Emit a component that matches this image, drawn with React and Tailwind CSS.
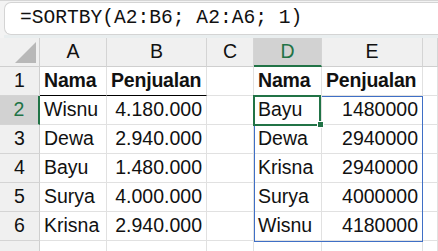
import React from "react";

const cols = ["A", "B", "C", "D", "E", ""];
const rows = [
  ["Nama", "Penjualan", "", "Nama", "Penjualan"],
  ["Wisnu", "4.180.000", "", "Bayu", "1480000"],
  ["Dewa", "2.940.000", "", "Dewa", "2940000"],
  ["Bayu", "1.480.000", "", "Krisna", "2940000"],
  ["Surya", "4.000.000", "", "Surya", "4000000"],
  ["Krisna", "2.940.000", "", "Wisnu", "4180000"],
];

function Cell({ r, c, v }) {
  const bold = r === 0 && v !== "";
  const right = r > 0 && (c === 1 || c === 4);
  const blackBottom = r === 0 && (c === 0 || c === 1);
  const sel = r === 1 && c === 3;
  return (
    <div
      className={
        "relative flex items-center border-r border-b px-[4px] whitespace-nowrap " +
        (blackBottom ? "border-b-black " : "border-b-[#e1e1e1] ") +
        "border-r-[#e1e1e1] " +
        (right ? "justify-end " : "justify-start ") +
        (bold ? "font-bold tracking-[-0.2px] " : "") +
        (sel ? "z-20 " : "")
      }
    >
      {v}
      {sel && (
        <>
          <div className="absolute -left-[1px] -top-[1px] w-[68px] h-[31px] border-2 border-[#217346]" />
          <div className="absolute -right-[3px] -bottom-[4px] w-[7px] h-[7px] bg-[#217346] border border-white" />
        </>
      )}
    </div>
  );
}

export default function App() {
  return (
    <div
      className="w-[438px] h-[251px] overflow-hidden bg-white text-[#111]"
      style={{ fontFamily: '"Liberation Sans", Arial, sans-serif' }}
    >
      {/* formula bar */}
      <div className="h-[38px] border-t border-[#d6d6d6] bg-[#f3f3f3] pl-[4px] pt-[1px] flex flex-col">
        <div className="h-[33px] bg-white border border-[#d4d4d4] rounded-l-[7px] border-r-0 flex items-center pl-[15px]">
          <span
            className="text-[19.6px] text-[#111] leading-none"
            style={{ fontFamily: '"Liberation Mono", "Courier New", monospace' }}
          >
            =SORTBY(A2:B6; A2:A6; 1)
          </span>
        </div>
        <div className="flex-1 bg-[#e9eeef]" />
      </div>

      {/* grid */}
      <div className="relative">
        <div className="grid grid-cols-[40px_67px_100px_47px_68px_101px_1fr] auto-rows-[29px] text-[19.5px]">
          {/* corner */}
          <div className="relative bg-[#f0f0f0] border-r border-b border-[#cfcfcf]">
            <svg className="absolute right-[3px] bottom-[3px]" width="21" height="21" viewBox="0 0 21 21">
              <polygon points="21,0 21,21 0,21" fill="#b8b8b8" />
            </svg>
          </div>
          {cols.map((c, i) => (
            <div
              key={c + i}
              className={
                "flex items-center justify-center border-r border-r-[#d4d4d4] " +
                (c === "D"
                  ? "bg-[#d2d2d2] text-[#217346] border-b-2 border-b-[#217346]"
                  : "bg-[#f0f0f0] border-b border-b-[#cfcfcf]")
              }
            >
              {c}
            </div>
          ))}
          {rows.map((row, r) => (
            <React.Fragment key={r}>
              <div
                className={
                  "flex items-center justify-center border-b border-b-[#d4d4d4] " +
                  (r === 1
                    ? "bg-[#d2d2d2] text-[#217346] border-r-2 border-r-[#217346]"
                    : "bg-[#f0f0f0] border-r border-r-[#cfcfcf]")
                }
              >
                {r + 1}
              </div>
              {row.map((v, c) => (
                <Cell key={c} r={r} c={c} v={v} />
              ))}
              <div className="border-r border-b border-[#e1e1e1]" />
            </React.Fragment>
          ))}
          <div className="bg-[#f0f0f0] border-r border-[#cfcfcf]" />
          {[0, 1, 2, 3, 4, 5].map((i) => (
            <div key={i} className="border-r border-[#e1e1e1]" />
          ))}
        </div>
        {/* spill range outline */}
        <div className="absolute z-10 left-[254px] top-[58px] w-[169px] h-[146px] border border-[#3f6fc6] pointer-events-none" />
      </div>
    </div>
  );
}
